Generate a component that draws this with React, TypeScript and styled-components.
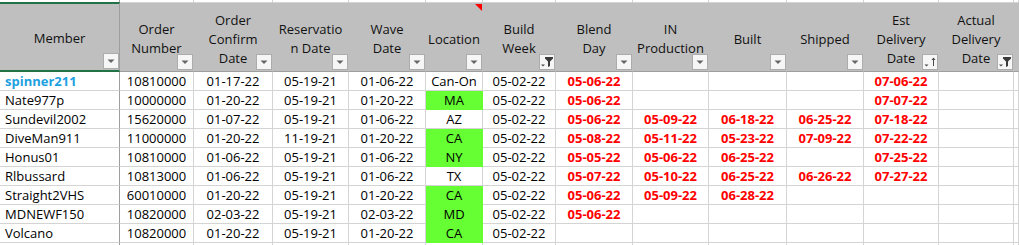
import React from 'react';
import styled, { createGlobalStyle } from 'styled-components';

const GRID = '#d4d4d4';
const FREEZE = '#9e9e9e';
const HEAD = '#bfbfbf';
const SELECT = '#217346';
const FILL = '#66ff33';
const RED = '#ff0000';
const BLUE = '#1ea1e1';

const GlobalStyle = createGlobalStyle`
  html, body { margin: 0; padding: 0; background: #ffffff; }
  body { font-family: "Open Sans", "Liberation Sans", sans-serif; color: #000; }
`;

type Filter = 'arrow' | 'funnel' | 'sort';
type Tone = 'plain' | 'red' | 'blue';

interface Column {
  lines: string[];
  width: number;
  left?: boolean;
  red?: boolean;
  filter: Filter;
  comment?: boolean;
}

const columns: Column[] = [
  { lines: ['Member'], width: 120, left: true, filter: 'arrow' },
  { lines: ['Order', 'Number'], width: 74, filter: 'arrow' },
  { lines: ['Order', 'Confirm', 'Date'], width: 79, filter: 'arrow' },
  { lines: ['Reservatio', 'n Date'], width: 76, filter: 'arrow' },
  { lines: ['Wave', 'Date'], width: 77, filter: 'arrow' },
  { lines: ['Location'], width: 57, filter: 'arrow', comment: true },
  { lines: ['Build', 'Week'], width: 73, filter: 'funnel' },
  { lines: ['Blend', 'Day'], width: 77, red: true, filter: 'arrow' },
  { lines: ['IN', 'Production'], width: 76, red: true, filter: 'arrow' },
  { lines: ['Built'], width: 78, red: true, filter: 'arrow' },
  { lines: ['Shipped'], width: 77, red: true, filter: 'arrow' },
  { lines: ['Est', 'Delivery', 'Date'], width: 75, red: true, filter: 'sort' },
  { lines: ['Actual', 'Delivery', 'Date'], width: 75, filter: 'funnel' },
];

interface Row {
  cells: string[];
  green?: boolean;
  featured?: boolean;
}

const rows: Row[] = [
  { featured: true, cells: ['spinner211', '10810000', '01-17-22', '05-19-21', '01-06-22', 'Can-On', '05-02-22', '05-06-22', '', '', '', '07-06-22', ''] },
  { green: true, cells: ['Nate977p', '10000000', '01-20-22', '05-19-21', '01-20-22', 'MA', '05-02-22', '05-06-22', '', '', '', '07-07-22', ''] },
  { cells: ['Sundevil2002', '15620000', '01-07-22', '05-19-21', '01-06-22', 'AZ', '05-02-22', '05-06-22', '05-09-22', '06-18-22', '06-25-22', '07-18-22', ''] },
  { green: true, cells: ['DiveMan911', '11000000', '01-20-22', '11-19-21', '01-20-22', 'CA', '05-02-22', '05-08-22', '05-11-22', '05-23-22', '07-09-22', '07-22-22', ''] },
  { green: true, cells: ['Honus01', '10810000', '01-06-22', '05-19-21', '01-06-22', 'NY', '05-02-22', '05-05-22', '05-06-22', '06-25-22', '', '07-25-22', ''] },
  { cells: ['Rlbussard', '10813000', '01-06-22', '05-19-21', '01-06-22', 'TX', '05-02-22', '05-07-22', '05-10-22', '06-25-22', '06-26-22', '07-27-22', ''] },
  { green: true, cells: ['Straight2VHS', '60010000', '01-20-22', '05-19-21', '01-20-22', 'CA', '05-02-22', '05-06-22', '05-09-22', '06-28-22', '', '', ''] },
  { green: true, cells: ['MDNEWF150', '10820000', '02-03-22', '05-19-21', '02-03-22', 'MD', '05-02-22', '05-06-22', '', '', '', '', ''] },
  { green: true, cells: ['Volcano', '10820000', '01-20-22', '05-19-21', '01-20-22', 'CA', '05-02-22', '', '', '', '', '', ''] },
  { cells: ['', '', '', '', '', '', '', '', '', '', '', '', ''] },
];

const LOCATION = 5;

const Sheet = styled.div<{ $cols: string }>`
  display: grid;
  grid-template-columns: ${(p) => p.$cols};
  grid-template-rows: 2px 70px repeat(10, 19px);
  width: 1019px;
  height: 245px;
  overflow: hidden;
  background: #ffffff;
`;

const StripCell = styled.div<{ $frozen?: boolean }>`
  box-sizing: border-box;
  height: 2px;
  border-right: 1px solid ${(p) => (p.$frozen ? FREEZE : GRID)};
  background: #ffffff;
`;

const HeadCell = styled.div<{ $selected?: boolean; $frozen?: boolean }>`
  box-sizing: border-box;
  position: relative;
  display: flex;
  align-items: center;
  justify-content: center;
  padding-top: ${(p) => (p.$selected ? '3px' : '4px')};
  background: ${HEAD};
  border-top: ${(p) => (p.$selected ? `2px solid ${SELECT}` : `1px solid ${GRID}`)};
  border-bottom: ${(p) => (p.$selected ? `2px solid ${SELECT}` : `1px solid ${FREEZE}`)};
  border-right: 1px solid ${(p) => (p.$frozen ? FREEZE : HEAD)};
  font-size: 13px;
  line-height: 19px;
  text-align: center;
  color: #111111;
  white-space: nowrap;
`;

const HeadText = styled.div`
  display: flex;
  flex-direction: column;
  align-items: center;
`;

const FilterButton = styled.div`
  box-sizing: border-box;
  position: absolute;
  right: 0;
  bottom: 1px;
  width: 16px;
  height: 16px;
  border: 1px solid #acacac;
  background: #f6f6f6;
  display: flex;
  align-items: center;
  justify-content: center;
`;

const CommentMark = styled.div`
  position: absolute;
  top: 1px;
  right: 0;
  width: 0;
  height: 0;
  border-left: 7px solid transparent;
  border-top: 7px solid ${RED};
`;

const Cell = styled.div<{ $left?: boolean; $tone: Tone; $fill?: boolean; $frozen?: boolean }>`
  box-sizing: border-box;
  height: 19px;
  padding: ${(p) => (p.$left ? '0 0 0 5px' : '0')};
  background: ${(p) => (p.$fill ? FILL : '#ffffff')};
  border-right: 1px solid ${(p) => (p.$fill ? FILL : p.$frozen ? FREEZE : GRID)};
  border-bottom: 1px solid ${(p) => (p.$fill ? FILL : GRID)};
  font-size: 13px;
  line-height: 18px;
  text-align: ${(p) => (p.$left ? 'left' : 'center')};
  white-space: nowrap;
  overflow: hidden;
  color: ${(p) => (p.$tone === 'red' ? RED : p.$tone === 'blue' ? BLUE : '#000000')};
  font-weight: ${(p) => (p.$tone === 'plain' ? 400 : 700)};
`;

const FilterIcon: React.FC<{ kind: Filter }> = ({ kind }) => {
  if (kind === 'arrow') {
    return (
      <svg width="14" height="14" viewBox="0 0 14 14">
        <polygon points="3.5,5.5 10.5,5.5 7,9" fill="#666666" />
      </svg>
    );
  }
  if (kind === 'funnel') {
    return (
      <svg width="14" height="14" viewBox="0 0 14 14">
        <polygon points="5,2 13,2 13,3.5 10,6.5 10,11 8,12 8,6.5 5,3.5" fill="#3a3a3a" />
        <polygon points="1,9.5 5,9.5 3,11.5" fill="#4a4a4a" />
      </svg>
    );
  }
  return (
    <svg width="14" height="14" viewBox="0 0 14 14">
      <polygon points="1.5,9.5 5.5,9.5 3.5,11.5" fill="#4a4a4a" />
      <line x1="10.5" y1="3" x2="10.5" y2="11" stroke="#4a4a4a" strokeWidth="1" />
      <polygon points="8.5,5 12.5,5 10.5,2.5" fill="#4a4a4a" />
    </svg>
  );
};

const toneFor = (row: Row, ci: number, value: string): Tone => {
  if (!value) return 'plain';
  if (ci === 0 && row.featured) return 'blue';
  if (columns[ci]?.red) return 'red';
  return 'plain';
};

export default function App() {
  const cols = columns.map((c) => `${c.width}px`).join(' ') + ' 1fr';
  return (
    <>
      <GlobalStyle />
      <Sheet $cols={cols}>
        {columns.map((c, i) => (
          <StripCell key={`s${i}`} $frozen={i === 0} />
        ))}
        <StripCell />

        {columns.map((c, i) => (
          <HeadCell key={`h${i}`} $selected={i === 0} $frozen={i === 0}>
            <HeadText>
              {c.lines.map((l, j) => (
                <span key={j}>{l}</span>
              ))}
            </HeadText>
            {c.comment && <CommentMark />}
            <FilterButton>
              <FilterIcon kind={c.filter} />
            </FilterButton>
          </HeadCell>
        ))}
        <HeadCell />

        {rows.map((row, ri) => (
          <React.Fragment key={`r${ri}`}>
            {row.cells.map((v, ci) => (
              <Cell
                key={ci}
                $left={columns[ci].left}
                $frozen={ci === 0}
                $fill={ci === LOCATION && row.green}
                $tone={toneFor(row, ci, v)}
              >
                {v}
              </Cell>
            ))}
            <Cell $tone="plain" />
          </React.Fragment>
        ))}
      </Sheet>
    </>
  );
}
